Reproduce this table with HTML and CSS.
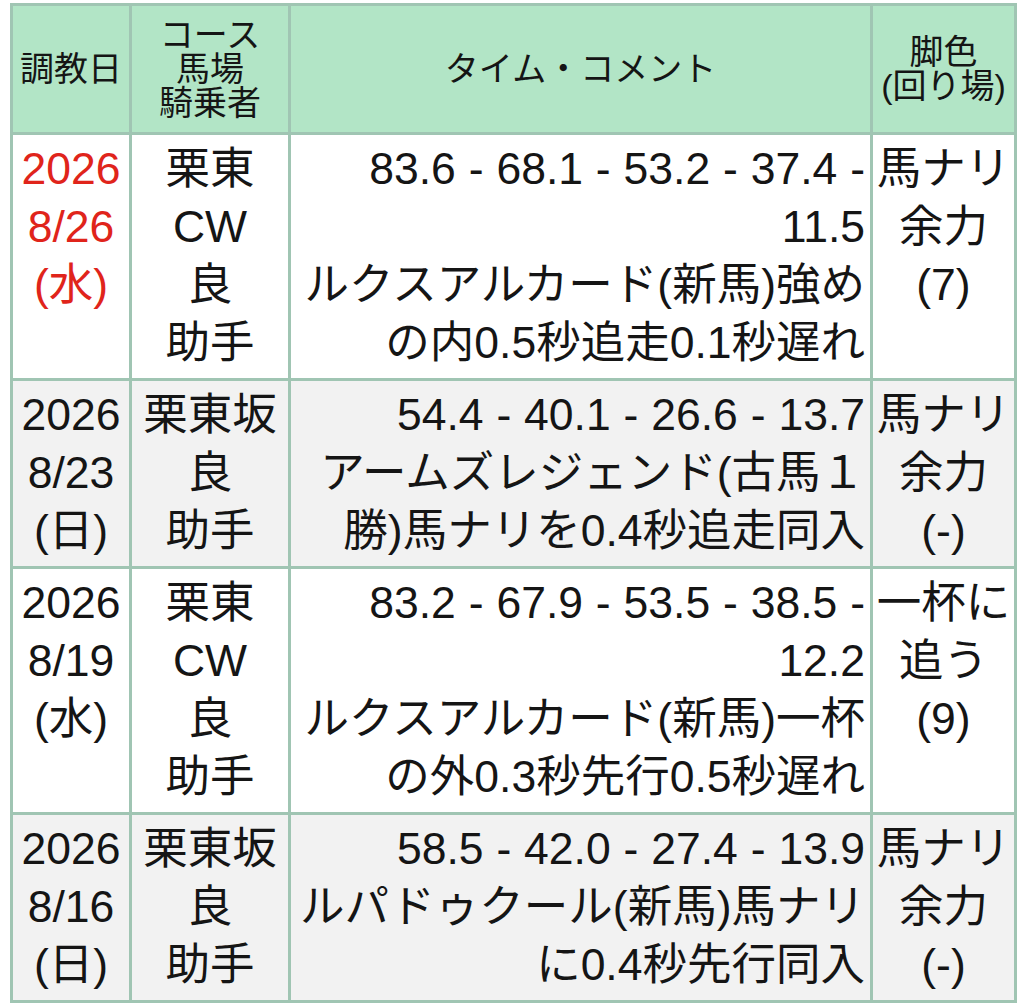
FILE: index.html
```html
<!DOCTYPE html>
<html lang="ja">
<head>
<meta charset="utf-8">
<title>調教</title>
<link rel="stylesheet" href="styles.css">
</head>
<body>
<table class="training">
  <colgroup>
    <col class="c-date">
    <col class="c-course">
    <col class="c-time">
    <col class="c-leg">
  </colgroup>
  <thead>
    <tr>
      <th>調教日</th>
      <th>コース<br>馬場<br>騎乗者</th>
      <th>タイム・コメント</th>
      <th>脚色<br>(回り場)</th>
    </tr>
  </thead>
  <tbody>
    <tr>
      <td class="date latest">2026<br>8/26<br>(水)</td>
      <td class="course">栗東<br>CW<br>良<br>助手</td>
      <td class="time">83.6 - 68.1 - 53.2 - 37.4 - 11.5<br>ルクスアルカード(新馬)強めの内0.5秒追走0.1秒遅れ</td>
      <td class="leg">馬ナリ<br>余力<br>(7)</td>
    </tr>
    <tr class="alt">
      <td class="date">2026<br>8/23<br>(日)</td>
      <td class="course">栗東坂<br>良<br>助手</td>
      <td class="time">54.4 - 40.1 - 26.6 - 13.7<br>アームズレジェンド(古馬１勝)馬ナリを0.4秒追走同入</td>
      <td class="leg">馬ナリ<br>余力<br>(-)</td>
    </tr>
    <tr>
      <td class="date">2026<br>8/19<br>(水)</td>
      <td class="course">栗東<br>CW<br>良<br>助手</td>
      <td class="time">83.2 - 67.9 - 53.5 - 38.5 - 12.2<br>ルクスアルカード(新馬)一杯の外0.3秒先行0.5秒遅れ</td>
      <td class="leg">一杯に<br>追う<br>(9)</td>
    </tr>
    <tr class="alt">
      <td class="date">2026<br>8/16<br>(日)</td>
      <td class="course">栗東坂<br>良<br>助手</td>
      <td class="time">58.5 - 42.0 - 27.4 - 13.9<br>ルパドゥクール(新馬)馬ナリに0.4秒先行同入</td>
      <td class="leg">馬ナリ<br>余力<br>(-)</td>
    </tr>
  </tbody>
</table>
</body>
</html>
```

FILE: styles.css
```css
html, body {
  margin: 0;
  background: #ffffff;
}

body {
  padding: 3px 10px 0 10px;
  font-family: "Liberation Sans", "Noto Sans CJK JP", sans-serif;
  color: #151515;
}

.training {
  width: 1004px;
  border-collapse: collapse;
  table-layout: fixed;
}

.c-date { width: 119px; }
.c-course { width: 159px; }
.c-time { width: 582px; }
.c-leg { width: 144px; }

.training th,
.training td {
  border: 3px solid #a0c5b3;
}

.training th {
  background: #b2e5c6;
  font-weight: normal;
  font-size: 34px;
  line-height: 34px;
  padding: 12px 2px 12px;
  text-align: center;
  vertical-align: middle;
}

.training td {
  font-size: 44.5px;
  line-height: 58px;
  padding: 5px 4px 6px;
  vertical-align: top;
  text-align: center;
}

.training tr.alt td {
  background: #f2f2f2;
}

.training td.time {
  text-align: right;
  padding-right: 5px;
  padding-left: 5px;
  word-spacing: 0.5px;
}

.training td.leg {
  padding-left: 2px;
  padding-right: 2px;
}

.training td.latest {
  color: #e0241b;
}
```
